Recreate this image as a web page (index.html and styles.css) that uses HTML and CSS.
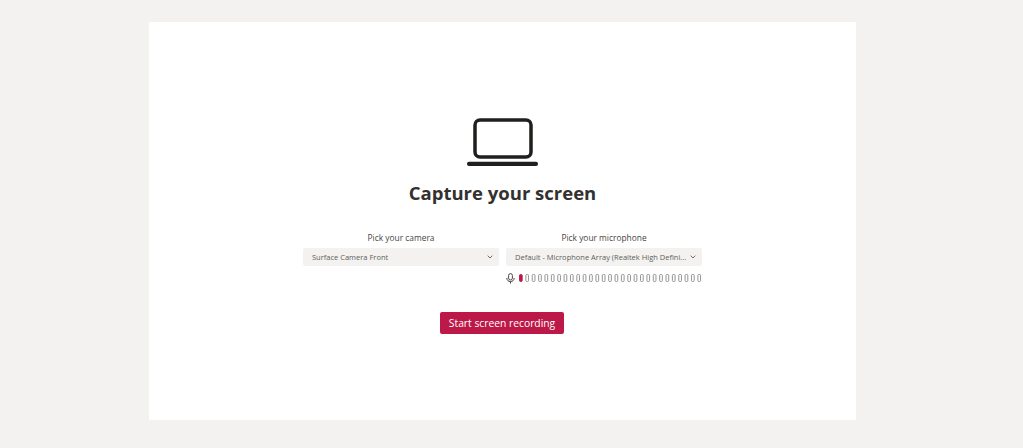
FILE: index.html
```html
<!DOCTYPE html>
<html lang="en">
  <head>
    <meta charset="UTF-8" />
    <title>Capture your screen</title>
    <link rel="stylesheet" href="styles.css">
  </head>
  <body>
    <main class="panel">
      <svg class="laptop" width="72" height="50" viewBox="0 0 72 50">
        <rect x="8" y="2" width="56" height="37" rx="5" fill="none" stroke="#201f1e" stroke-width="3.5" />
        <rect x="0" y="43.7" width="71" height="4.3" rx="2" fill="#201f1e" />
      </svg>
      <h1>Capture your screen</h1>

      <div class="devices">
        <div class="device">
          <label>Pick your camera</label>
          <div class="select">
            <span>Surface Camera Front</span>
            <svg class="chevron" width="6" height="4" viewBox="0 0 6 4"><path d="M0.7 0.7l2.3 2.3 2.3-2.3" fill="none" stroke="#605e5c" stroke-width="0.9" /></svg>
          </div>
        </div>
        <div class="device">
          <label>Pick your microphone</label>
          <div class="select">
            <span>Default - Microphone Array (Realtek High Defini...</span>
            <svg class="chevron" width="6" height="4" viewBox="0 0 6 4"><path d="M0.7 0.7l2.3 2.3 2.3-2.3" fill="none" stroke="#605e5c" stroke-width="0.9" /></svg>
          </div>
          <div class="meter">
            <svg class="mic" width="9" height="11" viewBox="0 0 9 11">
              <rect x="2.6" y="0.6" width="3.8" height="6.4" rx="1.9" fill="none" stroke="#484644" />
              <path d="M0.8 5c0 2.2 1.6 3.6 3.7 3.6s3.7-1.4 3.7-3.6M4.5 8.6V10.6" fill="none" stroke="#484644" />
            </svg>
            <svg class="bars" id="bars" width="184" height="10" viewBox="0 0 184 10"></svg>
          </div>
        </div>
      </div>

      <button type="button">Start screen recording</button>
    </main>

    <script>
      var bars = document.getElementById("bars");
      var markup = "";
      for (var i = 0; i < 29; i++) {
        var cls = i == 0 ? "on" : "off";
        markup += '<rect class="' + cls + '" x="' + (0.5 + i * 6.37) + '" y="1.5" width="2.7" height="7" rx="1" />';
      }
      bars.innerHTML = markup;
    </script>
  </body>
</html>
```

FILE: styles.css
```css
* {
  box-sizing: border-box;
}
html,
body {
  height: 100%;
}
body {
  margin: 0;
  padding: 22px 167px 28px 149px;
  background: #f3f2f1;
  font-family: "Open Sans", "Noto Sans", sans-serif;
  color: #484644;
  overflow: hidden;
}
.panel {
  height: 398px;
  background: #fff;
  display: flex;
  flex-direction: column;
  align-items: center;
  padding-top: 96px;
}
.laptop {
  display: block;
}
h1 {
  margin: 11px 0 0;
  font-size: 18.5px;
  line-height: 27px;
  font-weight: 700;
  color: #323130;
}
.devices {
  display: flex;
  align-items: flex-start;
  gap: 7px;
  margin-top: 26px;
}
.device {
  width: 196px;
}
label {
  display: block;
  text-align: center;
  font-size: 8.4px;
  line-height: 12px;
  margin-bottom: 4px;
}
.select {
  height: 18px;
  background: #f3f2f1;
  border-radius: 2px;
  display: flex;
  align-items: center;
  justify-content: space-between;
  padding: 0 6px 0 9px;
  font-size: 7.5px;
  color: #605e5c;
}
.meter {
  display: flex;
  align-items: center;
  margin-top: 6px;
  height: 12px;
}
.mic {
  flex: none;
  margin-right: 4px;
}
.bars {
  flex: none;
}
.bars .off {
  fill: none;
  stroke: #8a8886;
  stroke-width: 0.9;
}
.bars .on {
  fill: #bc1948;
  stroke: #bc1948;
  stroke-width: 0.9;
}
button {
  margin-top: 28px;
  margin-right: 1px;
  height: 22px;
  width: 124px;
  padding: 0;
  background: #bc1948;
  color: #fff;
  border: none;
  border-radius: 2px;
  font-family: inherit;
  font-size: 10.3px;
}
```
